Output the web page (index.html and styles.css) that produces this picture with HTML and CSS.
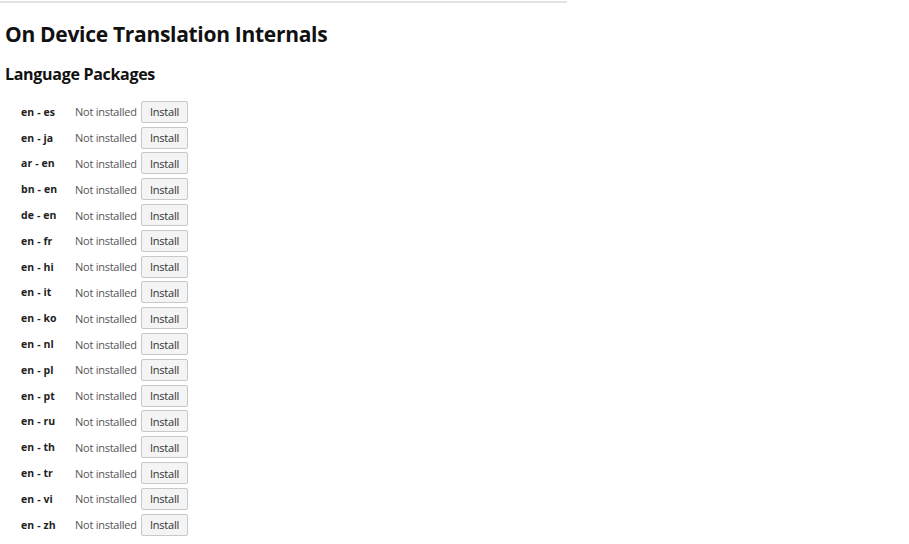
FILE: index.html
```html
<!DOCTYPE html>
<html>
<head>
<meta charset="utf-8">
<link rel="stylesheet" href="styles.css">
</head>
<body>
<div class="topline"></div>
<h1 class="title">On Device Translation Internals</h1>
<h2 class="subtitle">Language Packages</h2>
<div class="packages">
  <div class="row"><span class="pair">en - es</span><span class="status">Not installed</span><button class="btn">Install</button></div>
  <div class="row"><span class="pair">en - ja</span><span class="status">Not installed</span><button class="btn">Install</button></div>
  <div class="row"><span class="pair">ar - en</span><span class="status">Not installed</span><button class="btn">Install</button></div>
  <div class="row"><span class="pair">bn - en</span><span class="status">Not installed</span><button class="btn">Install</button></div>
  <div class="row"><span class="pair">de - en</span><span class="status">Not installed</span><button class="btn">Install</button></div>
  <div class="row"><span class="pair">en - fr</span><span class="status">Not installed</span><button class="btn">Install</button></div>
  <div class="row"><span class="pair">en - hi</span><span class="status">Not installed</span><button class="btn">Install</button></div>
  <div class="row"><span class="pair">en - it</span><span class="status">Not installed</span><button class="btn">Install</button></div>
  <div class="row"><span class="pair">en - ko</span><span class="status">Not installed</span><button class="btn">Install</button></div>
  <div class="row"><span class="pair">en - nl</span><span class="status">Not installed</span><button class="btn">Install</button></div>
  <div class="row"><span class="pair">en - pl</span><span class="status">Not installed</span><button class="btn">Install</button></div>
  <div class="row"><span class="pair">en - pt</span><span class="status">Not installed</span><button class="btn">Install</button></div>
  <div class="row"><span class="pair">en - ru</span><span class="status">Not installed</span><button class="btn">Install</button></div>
  <div class="row"><span class="pair">en - th</span><span class="status">Not installed</span><button class="btn">Install</button></div>
  <div class="row"><span class="pair">en - tr</span><span class="status">Not installed</span><button class="btn">Install</button></div>
  <div class="row"><span class="pair">en - vi</span><span class="status">Not installed</span><button class="btn">Install</button></div>
  <div class="row"><span class="pair">en - zh</span><span class="status">Not installed</span><button class="btn">Install</button></div>
</div>
</body>
</html>
```
FILE: styles.css
```css
html, body {
  margin: 0;
  padding: 0;
  background: #fff;
  color: #111;
  font-family: "Open Sans", "Noto Sans", sans-serif;
}
.topline {
  width: 567px;
  height: 2px;
  background: #e2e2e2;
  margin-top: 1px;
}
.title {
  margin: 18px 0 0 5px;
  font-size: 21px;
  font-weight: 700;
  line-height: 26px;
  letter-spacing: -0.3px;
}
.subtitle {
  margin: 17px 0 0 5px;
  font-size: 16px;
  font-weight: 700;
  line-height: 20px;
  letter-spacing: -0.3px;
}
.packages {
  display: flex;
  flex-direction: column;
  margin: 15px 0 0 0;
}
.row {
  display: flex;
  align-items: center;
  height: 25.8px;
}
.pair {
  width: 54px;
  padding-left: 21px;
  font-size: 10.5px;
  font-weight: 700;
  color: #222;
  letter-spacing: 0.1px;
}
.status {
  width: 66px;
  font-size: 11px;
  color: #555;
  letter-spacing: -0.25px;
}
.btn {
  width: 47px;
  height: 22px;
  padding: 0;
  margin: 0;
  font-family: "Open Sans", "Noto Sans", sans-serif;
  font-size: 11px;
  color: #333;
  background: #f4f4f4;
  border: 1px solid #c8c8c8;
  border-radius: 2px;
  letter-spacing: -0.2px;
}
```
